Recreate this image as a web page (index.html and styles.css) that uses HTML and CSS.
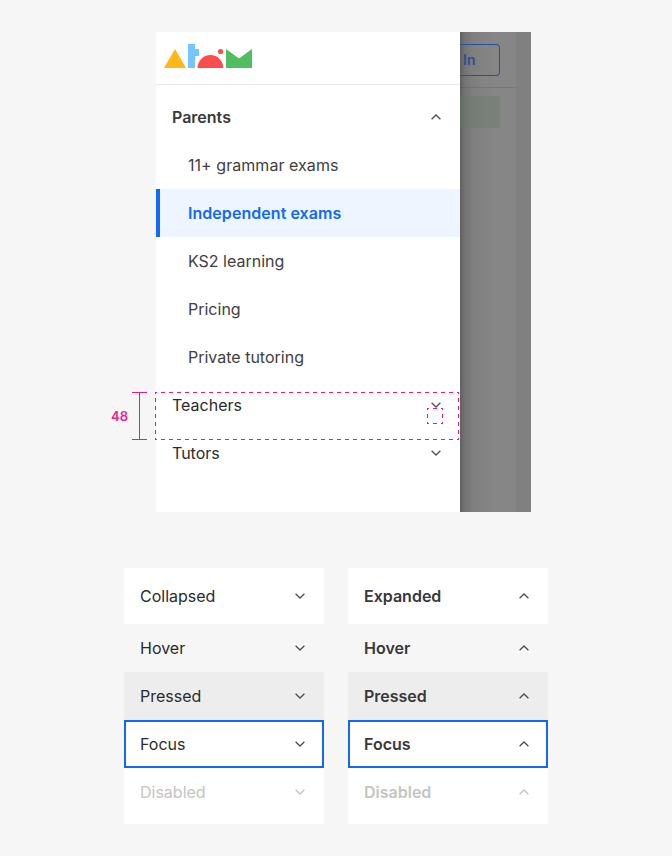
FILE: index.html
```html
<!DOCTYPE html>
<html lang="en">
<head>
<meta charset="utf-8">
<title>Navigation accordion</title>
<link rel="stylesheet" href="styles.css">
</head>
<body>
<svg width="0" height="0" class="defs">
  <symbol id="down" viewBox="0 0 16 16"><path d="M3.6 5.8 8 10.1 12.4 5.8" fill="none" stroke="currentColor" stroke-width="1.35"/></symbol>
  <symbol id="up" viewBox="0 0 16 16"><path d="M3.6 10.2 8 5.9 12.4 10.2" fill="none" stroke="currentColor" stroke-width="1.35"/></symbol>
</svg>
<main>
  <section class="device">
    <nav class="drawer">
      <header class="brand">
        <svg width="88" height="24" viewBox="0 0 88 24">
          <path d="M0 24 11 5 22 24z" fill="#ffb71b"/>
          <path d="M24 0h7v5h4v7h-4v12h-7z" fill="#73c6ff"/>
          <path d="M33.500 24a12.900 12.900 0 0 1 25.800 0z" fill="#fa4e4e"/>
          <circle cx="56.600" cy="7.500" r="2.600" fill="#fa4e4e"/>
          <path d="M62 5 75 14.500 88 5v19H62z" fill="#50be60"/>
        </svg>
      </header>
      <div class="menu">
        <div class="row bold"><span>Parents</span><svg class="icon"><use href="#up"/></svg></div>
        <a class="row sub wide">11+ grammar exams</a>
        <a class="row sub wide current">Independent exams</a>
        <a class="row sub">KS2 learning</a>
        <a class="row sub">Pricing</a>
        <a class="row sub">Private tutoring</a>
        <div class="row"><span>Teachers</span><svg class="icon"><use href="#down"/></svg></div>
        <div class="row"><span>Tutors</span><svg class="icon"><use href="#down"/></svg></div>
      </div>
    </nav>
    <div class="page">
      <div class="topbar"><span class="signin">In</span></div>
      <div class="banner"></div>
    </div>
    <div class="gutter"></div>
    <div class="measure">
      <span class="size">48</span>
      <svg width="350" height="50" viewBox="0 0 350 50" fill="none" stroke="#e91a8c">
        <path d="M2 1.500H17M2 48.500H17M9.500 1.500V48.500"/>
        <path d="M25 1.500H329M25 48.500H329M25.500 1V49M328.500 1V49" stroke-dasharray="4 4" stroke-dashoffset="2"/>
        <path d="M297 17.500H313M297 32.500H313M297.500 17V33M312.500 17V33" stroke-dasharray="4 4" stroke-dashoffset="2"/>
      </svg>
    </div>
  </section>
  <section class="states">
    <div class="column">
      <div class="row first"><span>Collapsed</span><svg class="icon"><use href="#down"/></svg></div>
      <div class="row hover"><span>Hover</span><svg class="icon"><use href="#down"/></svg></div>
      <div class="row pressed"><span>Pressed</span><svg class="icon"><use href="#down"/></svg></div>
      <div class="row focus"><span>Focus</span><svg class="icon"><use href="#down"/></svg></div>
      <div class="row disabled"><span>Disabled</span><svg class="icon"><use href="#down"/></svg></div>
    </div>
    <div class="column bold">
      <div class="row first"><span>Expanded</span><svg class="icon"><use href="#up"/></svg></div>
      <div class="row hover"><span>Hover</span><svg class="icon"><use href="#up"/></svg></div>
      <div class="row pressed"><span>Pressed</span><svg class="icon"><use href="#up"/></svg></div>
      <div class="row focus"><span>Focus</span><svg class="icon"><use href="#up"/></svg></div>
      <div class="row disabled"><span>Disabled</span><svg class="icon"><use href="#up"/></svg></div>
    </div>
  </section>
</main>
</body>
</html>
```
FILE: styles.css
```css
* { box-sizing: border-box; }
body {
  margin: 0;
  background: #f6f6f6;
  color: #2b2b2b;
  font: 16px/24px Inter, sans-serif;
}
.defs { position: absolute; }
main { padding-top: 32px; }
.device {
  position: relative;
  display: flex;
  width: 375px;
  height: 480px;
  margin-left: 156px;
}
.drawer { width: 304px; background: #fff; }
.brand {
  height: 53px;
  padding: 12px 8px;
  border-bottom: 1px solid #e8e8e8;
}
.brand svg { display: block; }
.menu { padding-top: 8px; }
.row {
  display: flex;
  align-items: center;
  justify-content: space-between;
  height: 48px;
  padding: 0 16px;
}
.icon { width: 16px; height: 16px; color: #505050; }
.bold { font-weight: 600; color: #383838; }
.sub { padding-left: 32px; color: #404040; }
.wide { letter-spacing: .05px; }
.sub.current {
  padding-left: 28px;
  border-left: 4px solid #0f69fa;
  background: #eef5ff;
  color: #0f69fa;
  font-weight: 600;
}
.page {
  width: 56px;
  background: linear-gradient(90deg, #606060, #747474 5px, #7e7e7e 12px, #838383 22px, #868686 36px);
}
.topbar {
  height: 56px;
  padding: 12px 16px 0 0;
  border-bottom: 1px solid rgba(0, 0, 0, .1);
}
.signin {
  display: block;
  height: 32px;
  padding-left: 3px;
  border: 1px solid #28519b;
  border-left: 0;
  border-radius: 0 4px 4px 0;
  color: #2d4f90;
  font-size: 14px;
  font-weight: 600;
  line-height: 30px;
}
.banner { width: 40px; height: 32px; margin-top: 8px; background: rgba(99, 117, 99, .35); }
.gutter { width: 15px; background: #808080; }
.measure {
  position: absolute;
  top: 359px;
  left: -45px;
  display: flex;
  align-items: center;
  color: #f0208f;
}
.measure svg { display: block; flex: none; }
.size { width: 19px; font-size: 13px; font-weight: 600; letter-spacing: .2px; }
.states {
  display: flex;
  gap: 24px;
  margin: 56px 0 0 124px;
}
.column { width: 200px; padding-bottom: 8px; background: #fff; }
.first { height: 56px; }
.hover { background: #f6f6f6; }
.pressed { background: #ededed; }
.focus { padding: 0 14px; border: 2px solid #0f69fa; }
.disabled, .disabled .icon { color: #c4c4c4; }
```
